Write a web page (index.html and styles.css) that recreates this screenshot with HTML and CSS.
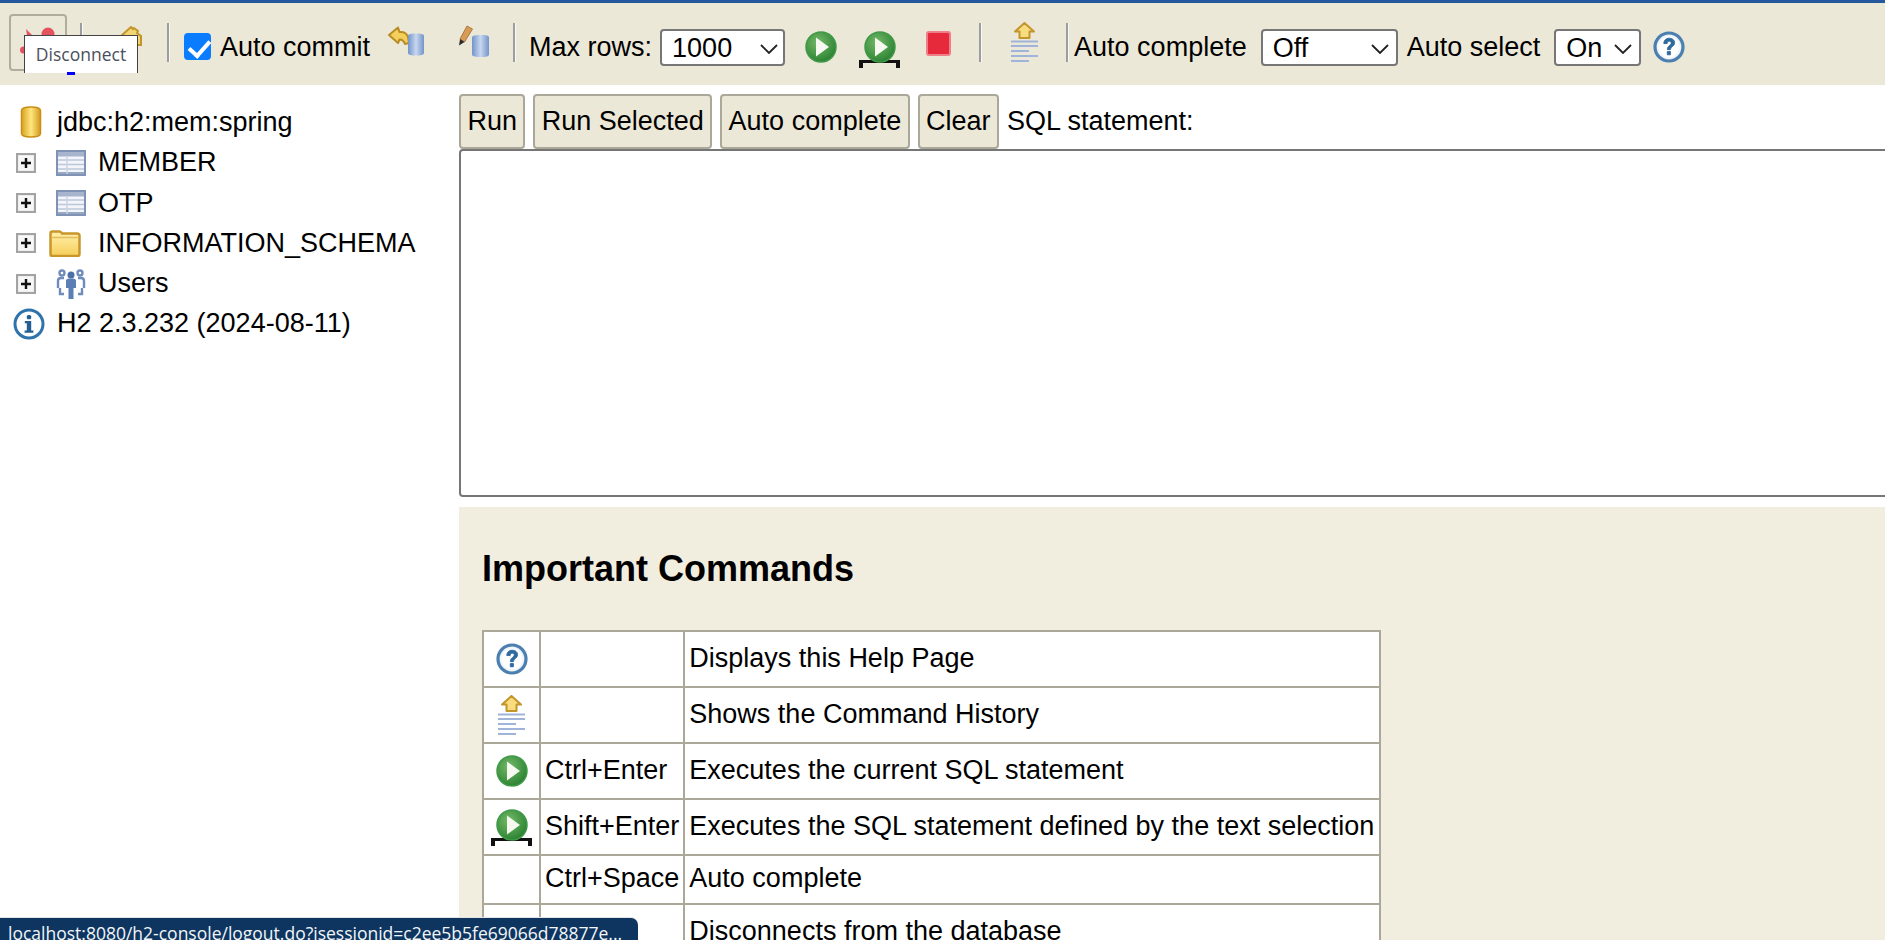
FILE: index.html
```html
<!DOCTYPE html>
<html lang="en">
<head>
<meta charset="utf-8">
<title>H2 Console</title>
<link rel="stylesheet" href="styles.css">
</head>
<body>
<svg class="defs" aria-hidden="true">
  <defs>
    <linearGradient id="gold" x1="0" x2="1" y1="0" y2="0"><stop offset="0" stop-color="#d9a21e"/><stop offset=".5" stop-color="#ffe680"/><stop offset="1" stop-color="#d39a1c"/></linearGradient>
    <linearGradient id="goldv" x1="0" x2="0" y1="0" y2="1"><stop offset="0" stop-color="#fff0ae"/><stop offset="1" stop-color="#f6cf5a"/></linearGradient>
    <linearGradient id="bluecyl" x1="0" x2="1" y1="0" y2="0"><stop offset="0" stop-color="#7294cb"/><stop offset=".5" stop-color="#c9d7ee"/><stop offset="1" stop-color="#7294cb"/></linearGradient>
    <radialGradient id="green" cx=".4" cy=".35" r=".75"><stop offset="0" stop-color="#74b968"/><stop offset=".7" stop-color="#3b8f3e"/><stop offset="1" stop-color="#23772b"/></radialGradient>
    <radialGradient id="paleblue" cx=".5" cy=".5" r=".55"><stop offset=".6" stop-color="#fff"/><stop offset="1" stop-color="#cfe0f0"/></radialGradient>
    <symbol id="i-run" viewBox="0 0 32 32"><circle cx="16" cy="16" r="15" fill="url(#green)" stroke="#3f9a48" stroke-width="1.500"/><path d="M11 6.500 L24 16 L11 25.500Z" fill="#f6f9f0"/></symbol>
    <symbol id="i-help" viewBox="0 0 32 32"><circle cx="16" cy="16" r="14" fill="url(#paleblue)" stroke="#4a7fb0" stroke-width="3.200"/><path d="M10.800 12.500c0-3.400 2.400-5.300 5.400-5.300 3.200 0 5.400 1.800 5.400 4.500 0 3.900-4.200 3.600-4.200 7h-3c0-4.500 3.800-4.200 3.800-6.800 0-1-.8-1.700-1.900-1.700-1.200 0-2 .8-2.100 2.300zM14.300 20.600h3.100v3.200h-3.100z" fill="#2f6a9f" stroke="#2f6a9f" stroke-width=".9"/></symbol>
    <symbol id="i-info" viewBox="0 0 32 32"><circle cx="16" cy="16" r="14" fill="#fff" stroke="#2e73ab" stroke-width="3"/><rect x="13.800" y="7" width="4.400" height="4.200" rx="1.500" fill="#235f92"/><path d="M11.800 13h6.400v9.500h2.200v2.300h-8.800v-2.300h2.200v-7.200h-2z" fill="#235f92"/></symbol>
    <symbol id="i-table" viewBox="0 0 30 26"><rect x="1" y="1" width="28" height="24" fill="#f3f5f9" stroke="#8093b5" stroke-width="2"/><rect x="2" y="2" width="26" height="4.500" fill="#a7b4cd"/><path d="M2 10h26M2 14.500h26M2 19h26" stroke="#bcc7db" stroke-width="1.500"/><path d="M2 23h26" stroke="#98a8c4" stroke-width="2"/><path d="M11 6v18" stroke="#cbd3e3" stroke-width="1.500"/></symbol>
    <symbol id="i-plus" viewBox="0 0 20 20"><rect x="1" y="1" width="18" height="18" fill="#f7f7f7" stroke="#a3a3a3" stroke-width="2.200"/><path d="M5 10h10M10 5v10" stroke="#111" stroke-width="2.400"/></symbol>
    <symbol id="i-folder" viewBox="0 0 32 28"><path d="M1.500 25V4.500q0-2 2-2h7q1.500 0 2.500 2h15q2.500 0 2.500 2.500V25q0 2-2 2h-25.500q-1.500 0-1.500-2z" fill="url(#goldv)" stroke="#c8962a" stroke-width="2.500"/><path d="M2.500 8.500h27" stroke="#e3bd5c" stroke-width="1.500"/></symbol>
    <symbol id="i-users" viewBox="0 0 30 32"><g fill="none" stroke="#6f8cbb" stroke-width="2.400"><circle cx="6" cy="5" r="2.500"/><circle cx="24" cy="5" r="2.500"/><path d="M2 20v-7q0-3 3-3h3M28 20v-7q0-3-3-3h-3M4 20v6h4M26 20v6h-4"/></g><circle cx="15" cy="7" r="3.500" fill="#4b6fa6"/><path d="M10 13q0-2.500 3-2.500h4q3 0 3 2.500v7h-2.500v11h-5V20H10z" fill="#5b7fb5"/></symbol>
    <symbol id="i-gold-cyl" viewBox="0 0 22 32"><path d="M1.500 4.500C1.500 2 6 1 11 1s9.500 1 9.500 3.500v23c0 2.500-4.500 3.500-9.500 3.500s-9.500-1-9.500-3.500z" fill="url(#gold)" stroke="#c98f15" stroke-width="1.500"/></symbol>
    <symbol id="i-rollback" viewBox="0 0 36 30"><path d="M1 9 L10 1.500 L11.500 6 C16 5.500 19 8 20 11 L21 17 L17 18 C16 15 14 13.500 11.500 13.500 L10 17z" fill="#f4cf5c" stroke="#b98d22" stroke-width="2" stroke-linejoin="round"/><path d="M20 10C20 8 23.500 7.500 28 7.500s8 .5 8 2.500v17c0 2-3.500 2.500-8 2.500s-8-.5-8-2.500z" fill="url(#bluecyl)"/></symbol>
    <symbol id="i-commit" viewBox="0 0 32 32"><path d="M2 14 L9 1 L14.500 4 L6.500 17z" fill="#d79b55" stroke="#a8793e" stroke-width="1"/><path d="M1 20.500 L2 14 L6.500 17z" fill="#2b2b2b"/><path d="M14 12.500C14 10.500 18 10 23 10s8 .5 8 2.500v17c0 2-3.500 2.500-8 2.500s-9-.5-9-2.500z" fill="url(#bluecyl)"/></symbol>
    <symbol id="i-hist" viewBox="0 0 27 41"><path d="M13.500 1 L23 9.500 L18.500 9.500 L18.500 16 L8.500 16 L8.500 9.500 L4 9.500z" fill="#f8dc7e" stroke="#c2962c" stroke-width="2" stroke-linejoin="round"/><path d="M0 19.500h27M0 24h27M0 29h18M0 34h27M0 39h18" stroke="#a0b3da" stroke-width="2.200"/></symbol>
    <symbol id="i-home" viewBox="0 0 22 20"><path d="M1 10 L11 1 L13 3 L14 2 L18 5 L17 7 L21 10 L21 19 L1 19z" fill="#f3d573" stroke="#c2962c" stroke-width="2"/></symbol>
  </defs>
</svg>

<header class="toolbar">
  <div class="tool-hover">
    <svg class="ic-disc" viewBox="0 0 34 34"><circle cx="26" cy="6" r="6.500" fill="#e5525f"/><path d="M4 1 L11 8 L6 13z" fill="#e5525f"/><circle cx="1.500" cy="22" r="3.500" fill="#e5525f"/></svg>
  </div>
  <span class="sep sep-a"></span>
  <svg class="ic ic-home"><use href="#i-home"/></svg>
  <span class="sep sep-b"></span>
  <input class="check" type="checkbox" checked aria-label="Auto commit">
  <span class="lbl lbl-commit">Auto commit</span>
  <svg class="ic ic-rollback"><use href="#i-rollback"/></svg>
  <svg class="ic ic-commit"><use href="#i-commit"/></svg>
  <span class="sep sep-c"></span>
  <span class="lbl lbl-max">Max rows:</span>
  <select class="sel sel-rows"><option>1000</option></select>
  <svg class="ic ic-run"><use href="#i-run"/></svg>
  <div class="runsel">
    <svg class="ic ic-run-inner"><use href="#i-run"/></svg>
    <span class="bracket"></span>
  </div>
  <span class="stop"></span>
  <span class="sep sep-d"></span>
  <svg class="ic ic-hist"><use href="#i-hist"/></svg>
  <span class="sep sep-e"></span>
  <span class="lbl lbl-ac">Auto complete</span>
  <select class="sel sel-ac"><option>Off</option></select>
  <span class="lbl lbl-as">Auto select</span>
  <select class="sel sel-as"><option>On</option></select>
  <svg class="ic ic-help"><use href="#i-help"/></svg>
</header>

<div class="tooltip">Disconnect</div>
<span class="hover-link"></span>

<main class="main">
  <nav class="tree">
    <div class="tree-row root"><svg class="ic ic-dbroot"><use href="#i-gold-cyl"/></svg><span>jdbc:h2:mem:spring</span></div>
    <div class="tree-row"><svg class="ic ic-plus"><use href="#i-plus"/></svg><span class="slot"><svg class="ic ic-table"><use href="#i-table"/></svg></span><span>MEMBER</span></div>
    <div class="tree-row"><svg class="ic ic-plus"><use href="#i-plus"/></svg><span class="slot"><svg class="ic ic-table"><use href="#i-table"/></svg></span><span>OTP</span></div>
    <div class="tree-row"><svg class="ic ic-plus"><use href="#i-plus"/></svg><span class="slot"><svg class="ic ic-folder"><use href="#i-folder"/></svg></span><span>INFORMATION_SCHEMA</span></div>
    <div class="tree-row"><svg class="ic ic-plus"><use href="#i-plus"/></svg><span class="slot"><svg class="ic ic-users"><use href="#i-users"/></svg></span><span>Users</span></div>
    <div class="tree-row info"><svg class="ic ic-info"><use href="#i-info"/></svg><span>H2 2.3.232 (2024-08-11)</span></div>
  </nav>
  <section class="work">
    <div class="cmdbar">
      <button class="btn" type="button">Run</button>
      <button class="btn" type="button">Run Selected</button>
      <button class="btn" type="button">Auto complete</button>
      <button class="btn" type="button">Clear</button>
      <span class="sql-label">SQL statement:</span>
    </div>
    <textarea class="sql" aria-label="SQL statement"></textarea>
    <div class="help">
      <h3 class="help-title">Important Commands</h3>
      <table class="cmds">
        <tr class="r56"><td class="c-ic"><svg class="ic ic-help-t"><use href="#i-help"/></svg></td><td class="c-key"></td><td>Displays this Help Page</td></tr>
        <tr class="r56"><td class="c-ic"><svg class="ic ic-hist-t"><use href="#i-hist"/></svg></td><td class="c-key"></td><td>Shows the Command History</td></tr>
        <tr class="r56"><td class="c-ic"><svg class="ic ic-run-t"><use href="#i-run"/></svg></td><td class="c-key">Ctrl+Enter</td><td>Executes the current SQL statement</td></tr>
        <tr class="r56"><td class="c-ic"><div class="runsel runsel-t"><svg class="ic ic-run-inner"><use href="#i-run"/></svg><span class="bracket"></span></div></td><td class="c-key">Shift+Enter</td><td>Executes the SQL statement defined by the text selection</td></tr>
        <tr class="r49"><td class="c-ic"></td><td class="c-key">Ctrl+Space</td><td>Auto complete</td></tr>
        <tr class="r56"><td class="c-ic"></td><td class="c-key"></td><td>Disconnects from the database</td></tr>
      </table>
    </div>
  </section>
</main>

<div class="status">localhost:8080/h2-console/logout.do?jsessionid=c2ee5b5fe69066d78877e...</div>
</body>
</html>
```

FILE: styles.css
```css
* { box-sizing: border-box; }
html, body { margin: 0; height: 940px; overflow: hidden; }
body {
  background: #fff;
  color: #000;
  font: 27px "Liberation Sans", Arial, sans-serif;
  border-top: 3px solid #25589c;
  position: relative;
}
.defs { position: absolute; width: 0; height: 0; }
.ic { display: block; flex: none; filter: blur(.45px); }

/* top toolbar */
.toolbar {
  height: 82px;
  background: #ece8d8;
  display: flex;
  align-items: center;
  white-space: nowrap;
  padding-top: 7px;
}
.tool-hover {
  width: 58px;
  height: 57px;
  margin: -11px 0 0 9px;
  border: 2.500px solid #b1ad9d;
  border-radius: 4px;
  padding: 12px 0 0 11px;
  flex: none;
}
.ic-disc { display: block; width: 34px; height: 34px; overflow: visible; filter: blur(.45px); }
.sep { flex: none; width: 3px; height: 39px; margin-top: -10px; background: linear-gradient(90deg, #9d9d9d 0 62%, #f8f8f8 62%); }
.sep-a { margin-left: 13px; }
.ic-home { width: 22px; height: 20px; margin: -23px 0 0 37px; }
.sep-b { margin-left: 25px; }
.check {
  appearance: none;
  width: 27px;
  height: 27px;
  margin: -2px 0 0 14px;
  flex: none;
  border-radius: 4px;
  background: #0a7cff;
  position: relative;
}
.check::after {
  content: "";
  position: absolute;
  left: 9px;
  top: 3px;
  width: 9px;
  height: 17px;
  border: solid #fff;
  border-width: 0 4px 4px 0;
  transform: rotate(42deg);
}
.lbl { flex: none; }
.lbl-commit { margin-left: 9px; }
.ic-rollback { width: 36px; height: 30px; margin: -14px 0 0 18px; }
.ic-commit { width: 32px; height: 32px; margin: -13px 0 0 34px; }
.sep-c { margin-left: 23px; }
.lbl-max { margin-left: 13px; }
.sel {
  flex: none;
  height: 37px;
  font: inherit;
  color: #000;
  background-color: #fff;
  border: 2px solid #767676;
  border-radius: 4px;
  padding: 0 0 0 10px;
  appearance: none;
  background-repeat: no-repeat;
  background-image: url("data:image/svg+xml,%3Csvg xmlns='http://www.w3.org/2000/svg' width='18' height='10'%3E%3Cpath d='M1 1l8 8 8-8' fill='none' stroke='%23222' stroke-width='1.800'/%3E%3C/svg%3E");
}
.sel-rows { width: 125px; margin-left: 8px; background-position: 98px 13px; }
.ic-run { width: 32px; height: 32px; margin: -1px 0 0 20px; }
.ic-run-inner { width: 32px; height: 32px; }
.runsel { flex: none; width: 41px; margin-left: 22px; display: flex; flex-direction: column; align-items: center; }
.toolbar .runsel { margin-top: 3px; }
.bracket { display: block; width: 41px; height: 8px; margin-top: -3px; border: solid #111; border-width: 3px 4px 0 4px; }
.stop {
  flex: none;
  width: 25px;
  height: 25px;
  margin: -9px 0 0 26px;
  border-radius: 3px;
  background: #e62a3c;
  border: 2.500px solid #ee7f86;
}
.sep-d { margin-left: 28px; }
.ic-hist { width: 27px; height: 41px; margin: -11px 0 0 29px; }
.sep-e { margin-left: 28px; }
.lbl-ac { margin-left: 5px; }
.sel-ac { width: 137px; margin-left: 14px; background-position: 108px 13px; }
.lbl-as { margin-left: 9px; }
.sel-as { width: 87px; margin-left: 14px; background-position: 58px 13px; }
.ic-help { width: 32px; height: 32px; margin: -1px 0 0 12px; }

/* hover overlays */
.tooltip {
  position: absolute;
  left: 24px;
  top: 32px;
  width: 114px;
  height: 38px;
  background: #fff;
  border: 1px solid #444;
  border-bottom: 0;
  color: #4a4f5a;
  font: 17.500px "Open Sans", sans-serif;
  text-align: center;
  line-height: 36px;
}
.hover-link { position: absolute; left: 67px; top: 69px; width: 8px; height: 3px; background: #00f; }
.status {
  position: absolute;
  left: 0;
  top: 915px;
  width: 638px;
  height: 30px;
  padding: 3px 0 0 8px;
  background: #0e3560;
  border-top-right-radius: 7px;
  box-shadow: 0 -1px 0 #e4e4e4;
  color: #f2f5f8;
  font: 17.500px "Open Sans", sans-serif;
  white-space: nowrap;
  overflow: hidden;
}

/* main split */
.main { display: flex; height: 855px; overflow: hidden; }
.tree { flex: none; width: 459px; padding-top: 17.300px; }
.tree-row { height: 40.300px; display: flex; align-items: center; padding-left: 16px; }
.ic-plus { width: 20px; height: 20px; }
.slot { flex: none; width: 62px; display: flex; justify-content: center; padding-left: 8px; }
.ic-table { width: 30px; height: 26px; }
.ic-folder { width: 32px; height: 28px; margin-left: -12px; }
.ic-users { width: 30px; height: 32px; }
.root { padding-left: 20px; }
.ic-dbroot { width: 22px; height: 32px; margin-right: 15px; }
.info { padding-left: 13px; }
.ic-info { width: 32px; height: 32px; margin-right: 12px; }

.work { flex: 1; min-width: 0; overflow: hidden; }
.cmdbar { display: flex; align-items: center; height: 64px; padding-top: 9px; white-space: nowrap; }
.btn {
  flex: none;
  height: 55px;
  margin-right: 8px;
  padding: 0 6.400px;
  font: inherit;
  color: #000;
  background: #ece8d8;
  border: 2px solid #aba89a;
  border-radius: 4px;
}
.sql-label { flex: none; }
.sql {
  display: block;
  width: 1600px;
  height: 348px;
  margin: 0;
  padding: 0;
  background: #fff;
  border: 2px solid #767676;
  border-radius: 4px;
  resize: none;
  outline: 0;
}
.help { width: 1600px; margin-top: 10px; height: 500px; background: #f1eee0; padding: 1px 23px 0; }
.help-title { margin: 40px 0 41px; font-size: 36px; line-height: 41px; font-weight: bold; }
.cmds { border-collapse: collapse; background: #fff; width: 899px; }
.cmds td { border: 2px solid #aba89a; padding: 0 4px 2px; white-space: nowrap; }
.cmds td.c-ic { padding: 0; }
.r56 { height: 56px; }
.r49 { height: 49px; }
.c-ic { width: 57px; }
.c-ic .ic, .c-ic .runsel { margin: 0 auto; }
.c-key { width: 144px; }
.ic-help-t { width: 32px; height: 32px; }
.ic-hist-t { width: 27px; height: 41px; }
.ic-run-t { width: 32px; height: 32px; }
.runsel-t { width: 41px; }
```
